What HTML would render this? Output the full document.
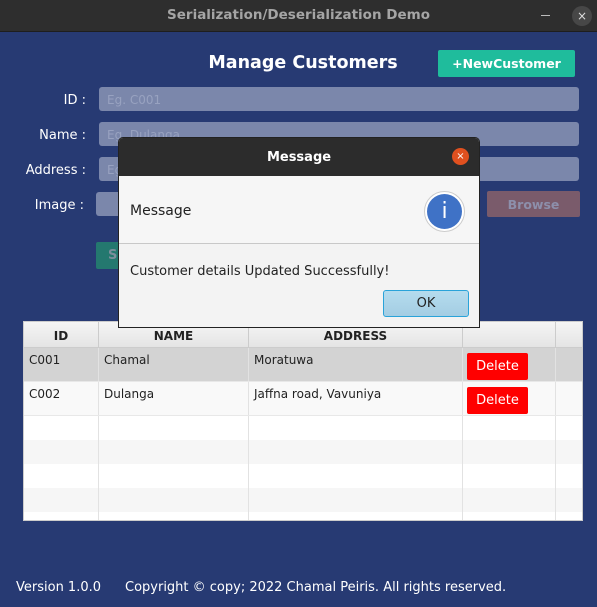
<!DOCTYPE html><html><head><style>
*{margin:0;padding:0;box-sizing:border-box}
body{width:597px;height:607px;background:#273a73;font-family:"DejaVu Sans","Liberation Sans",sans-serif;position:relative;overflow:hidden}
.a{position:absolute}
.tb{left:0;top:0;width:597px;height:32px;background:#2e2e2e;color:#a5a5a5;font-weight:bold;font-size:13.5px;text-align:center;line-height:31px;border-bottom:1px solid #1e1e1e}
.lbl{color:#fff;font-size:13px;text-align:right;width:86px;left:0}
.in{left:99px;width:480px;height:24px;background:#7b87ab;border-radius:3px;color:#98a2c0;font-size:12px;padding-left:8px;line-height:26px}
.cell{position:absolute;border-right:1px solid #e2e2e2;height:100%;top:0;font-size:12px;color:#222;padding:5px 5px}
</style></head><body>
<div class="a tb">Serialization/Deserialization Demo</div>
<div class="a" style="left:541px;top:15px;width:9px;height:1px;background:#bbb"></div>
<div class="a" style="left:572px;top:6px;width:20px;height:20px;border-radius:50%;background:#474747;color:#ddd;font-size:12px;text-align:center;line-height:20px">×</div>
<div class="a" style="left:190px;top:53px;width:226px;text-align:center;color:#fff;font-weight:bold;font-size:17.5px">Manage Customers</div>
<div class="a" style="left:438px;top:50px;width:137px;height:27px;background:#1fbc9c;border-radius:2px;color:#fff;font-weight:bold;font-size:12.5px;text-align:center;line-height:27px">+NewCustomer</div>
<div class="a lbl" style="top:93px">ID :</div>
<div class="a lbl" style="top:128px">Name :</div>
<div class="a lbl" style="top:163px">Address :</div>
<div class="a lbl" style="top:198px;width:84px">Image :</div>
<div class="a in" style="top:87px">Eg. C001</div>
<div class="a in" style="top:122px">Eg. Dulanga</div>
<div class="a in" style="top:157px">Eg.</div>
<div class="a in" style="top:192px;left:96px;width:30px"></div>
<div class="a" style="left:487px;top:191px;width:93px;height:26px;background:#7a5b6b;border-radius:2px;color:#8d8fab;font-weight:bold;font-size:12.5px;text-align:center;line-height:27px">Browse</div>
<div class="a" style="left:96px;top:242px;width:40px;height:27px;background:#24786f;border-radius:2px;color:#7c8e9c;font-weight:bold;font-size:13px;line-height:27px;padding-left:12px">S</div>
<div class="a" style="left:23px;top:321px;width:560px;height:200px;background:#fff;border:1px solid #ccc;overflow:hidden">
 <div style="position:relative;height:26px;background:linear-gradient(#f5f5f5,#e4e4e4);border-bottom:1px solid #ccc;font-weight:bold;font-size:12px;color:#333;text-align:center;line-height:28px">
  <div class="cell" style="left:0;width:75px;padding:0;border-color:#ccc">ID</div>
  <div class="cell" style="left:75px;width:150px;padding:0;border-color:#ccc">NAME</div>
  <div class="cell" style="left:225px;width:214px;padding:0;border-color:#ccc">ADDRESS</div>
  <div class="cell" style="left:439px;width:93px;padding:0;border-color:#ccc"></div>
 </div>
 <div style="position:relative;height:34px;background:#d3d3d3;border-bottom:1px solid #e8e8e8">
  <div class="cell" style="left:0;width:75px">C001</div><div class="cell" style="left:75px;width:150px">Chamal</div><div class="cell" style="left:225px;width:214px">Moratuwa</div>
  <div class="cell" style="left:439px;width:93px;padding:4px 4px"><div style="margin-top:1px;width:61px;height:27px;background:#f00;border-radius:2px;color:#fff;font-size:13px;text-align:center;line-height:27px">Delete</div></div>
 </div>
 <div style="position:relative;height:34px;background:#f9f9f9;border-bottom:1px solid #e8e8e8">
  <div class="cell" style="left:0;width:75px">C002</div><div class="cell" style="left:75px;width:150px">Dulanga</div><div class="cell" style="left:225px;width:214px">Jaffna road, Vavuniya</div>
  <div class="cell" style="left:439px;width:93px;padding:4px 4px"><div style="margin-top:1px;width:61px;height:27px;background:#f00;border-radius:2px;color:#fff;font-size:13px;text-align:center;line-height:27px">Delete</div></div>
 </div>
 <div style="position:relative;height:120px;background:repeating-linear-gradient(#fff 0,#fff 24px,#f6f6f6 24px,#f6f6f6 48px)">
  <div class="cell" style="left:0;width:75px"></div><div class="cell" style="left:75px;width:150px"></div><div class="cell" style="left:225px;width:214px"></div><div class="cell" style="left:439px;width:93px"></div>
 </div>
</div>
<div class="a" style="left:16px;top:580px;color:#fff;font-size:13px">Version 1.0.0</div>
<div class="a" style="left:125px;top:580px;color:#fff;font-size:13px">Copyright © copy; 2022 Chamal Peiris. All rights reserved.</div>
<div class="a" style="left:118px;top:137px;width:362px;height:191px;background:#f3f3f3;border:1px solid #222;border-radius:5px 5px 0 0;overflow:hidden">
 <div style="height:38px;background:#2c2c2c;color:#fff;font-weight:bold;font-size:13px;text-align:center;line-height:40px">Message</div>
 <div class="a" style="left:333px;top:10px;width:17px;height:17px;border-radius:50%;background:#e0501f;color:#fff;font-size:10px;text-align:center;line-height:17px">×</div>
 <div style="height:68px;background:#f6f6f6;border-bottom:1px solid #c8c8c8;position:relative">
  <div class="a" style="left:11px;top:27px;font-size:14px;color:#222">Message</div>
  <div class="a" style="left:305px;top:15px;width:41px;height:41px;border-radius:50%;border:1px solid #ccc;background:#fff"></div>
  <div class="a" style="left:308px;top:18px;width:35px;height:35px;border-radius:50%;background:#3f72c6;color:#fff;font-size:22px;text-align:center;line-height:35px">i</div>
 </div>
 <div class="a" style="left:11px;top:126px;font-size:13px;color:#222">Customer details Updated Successfully!</div>
 <div class="a" style="left:264px;top:152px;width:86px;height:27px;background:linear-gradient(#b5dcee,#a4cde3);border:1px solid #2aa3d9;border-radius:3px;font-size:13px;color:#222;text-align:center;line-height:26px">OK</div>
</div>
</body></html>
